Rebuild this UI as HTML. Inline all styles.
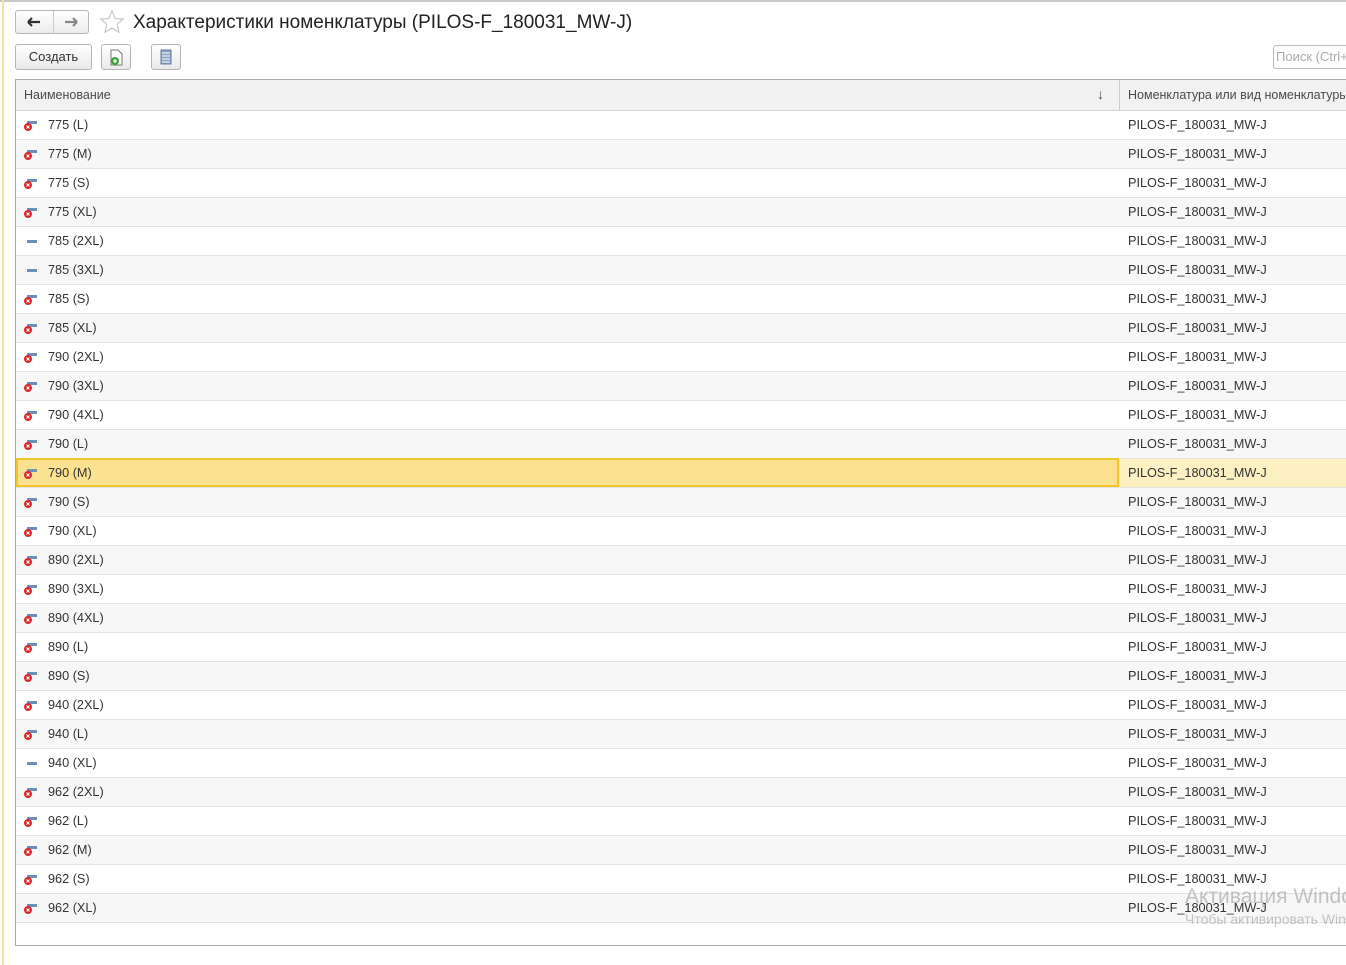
<!DOCTYPE html>
<html><head><meta charset="utf-8"><style>
*{box-sizing:border-box;margin:0;padding:0}
body{width:1346px;height:965px;overflow:hidden;background:#fff;font-family:"Liberation Sans",Arial,sans-serif;position:relative;color:#333}
.top{position:absolute;left:0;top:0;width:1346px;height:2px;background:#c8c8c8}
.lstrip{position:absolute;left:2px;top:0;width:2px;height:965px;background:#f3e39a}
.nav{position:absolute;left:15px;top:10px;width:74px;height:24px;border:1px solid #b8b8b8;border-radius:3px;background:linear-gradient(#fff,#ececec)}
.nav .sep{position:absolute;left:37px;top:0;width:1px;height:22px;background:#ccc}
.title{position:absolute;left:133px;top:12px;font-size:19px;color:#222;white-space:nowrap}
.btn{position:absolute;top:44px;height:26px;border:1px solid #b5b5b5;border-radius:3px;background:linear-gradient(#fff,#e9e9e9);font-size:13px;color:#333;text-align:center;line-height:24px}
.search{position:absolute;left:1273px;top:45px;width:80px;height:24px;border:1px solid #bbb;border-radius:3px;font-size:13px;color:#aaa;padding:3px 2px;white-space:nowrap;overflow:hidden}
.grid{position:absolute;left:15px;top:79px;width:1340px;height:867px;border:1px solid #a9a9a9;border-right:none}
.hdr{height:31px;background:#f2f2f2;border-bottom:1px solid #d4d4d4;font-size:12.5px;color:#4a4a4a;position:relative}
.hdr span{position:absolute;top:8px}
.row{height:29px;border-bottom:1px solid #e3e3e3;position:relative;font-size:12.7px;color:#333}
.row:nth-child(even){background:#f7f7f7}
.row .a{position:absolute;left:32px;top:7px}
.row .b{position:absolute;left:1112px;top:7px}
.row.sel{background:#fbe49a}
.row.sel .c1{position:absolute;left:0;top:-1px;width:1103px;height:29px;border:2px solid #f2c529;background:#fce290}
.row.sel .c2{position:absolute;left:1104px;top:0;width:240px;height:28px;background:#fdf1c4}
.ic{position:absolute;left:6px;top:6px;width:16px;height:16px}
</style></head><body>
<div class="top"></div><div class="lstrip"></div>
<div class="nav"><svg width="74" height="24" style="position:absolute;left:0;top:0"><path d="M12 11h12M12 11l4-4M12 11l4 4" stroke="#333" stroke-width="2.2" fill="none"/><path d="M49 11h12M61 11l-4-4M61 11l-4 4" stroke="#888" stroke-width="2.2" fill="none"/></svg><div class="sep"></div></div>
<svg style="position:absolute;left:99px;top:10px" width="26" height="24"><path d="M13 1l3.2 7.5 8 .6-6.1 5.2 1.9 7.9L13 18l-7 4.2 1.9-7.9L1.8 9.1l8-.6z" fill="none" stroke="#c8c8c8" stroke-width="1.2"/></svg>
<div class="title">Характеристики номенклатуры (PILOS-F_180031_MW-J)</div>
<div class="btn" style="left:15px;width:77px">Создать</div>
<div class="btn" style="left:101px;width:30px"><svg width="28" height="24"><path d="M9 5h7l4 4v11H9z" fill="#fff" stroke="#777"/><circle cx="13" cy="16" r="4" fill="#3aa43a"/><path d="M11 16h4M13 14v4" stroke="#fff" stroke-width="1.3"/></svg></div>
<div class="btn" style="left:151px;width:30px"><svg width="28" height="24"><rect x="9" y="5" width="10" height="14" fill="#8aa5c2" stroke="#5f7da0"/><path d="M10 8h8M10 11h8M10 14h8M10 17h8" stroke="#fff"/></svg></div>
<div class="search">Поиск (Ctrl+F)</div>
<div class="grid">
<div class="hdr"><span style="left:8px">Наименование</span><span style="left:1081px;top:6px;font-size:14px">↓</span><div style="position:absolute;left:1103px;top:0;width:1px;height:30px;background:#ccc"></div><span style="left:1112px;white-space:nowrap">Номенклатура или вид номенклатуры</span></div>
<div id="rows">
<div class="row"><svg class="ic"><rect x="5" y="4" width="10" height="3" fill="#6d8fb5"/><circle cx="6" cy="10" r="4" fill="#d9262b"/><path d="M4.5 8.5l3 3M7.5 8.5l-3 3" stroke="#fff"/></svg><span class="a">775 (L)</span><span class="b">PILOS-F_180031_MW-J</span></div>
<div class="row"><svg class="ic"><rect x="5" y="4" width="10" height="3" fill="#6d8fb5"/><circle cx="6" cy="10" r="4" fill="#d9262b"/><path d="M4.5 8.5l3 3M7.5 8.5l-3 3" stroke="#fff"/></svg><span class="a">775 (M)</span><span class="b">PILOS-F_180031_MW-J</span></div>
<div class="row"><svg class="ic"><rect x="5" y="4" width="10" height="3" fill="#6d8fb5"/><circle cx="6" cy="10" r="4" fill="#d9262b"/><path d="M4.5 8.5l3 3M7.5 8.5l-3 3" stroke="#fff"/></svg><span class="a">775 (S)</span><span class="b">PILOS-F_180031_MW-J</span></div>
<div class="row"><svg class="ic"><rect x="5" y="4" width="10" height="3" fill="#6d8fb5"/><circle cx="6" cy="10" r="4" fill="#d9262b"/><path d="M4.5 8.5l3 3M7.5 8.5l-3 3" stroke="#fff"/></svg><span class="a">775 (XL)</span><span class="b">PILOS-F_180031_MW-J</span></div>
<div class="row"><svg class="ic"><rect x="5" y="7" width="10" height="3" fill="#6d8fb5"/></svg><span class="a">785 (2XL)</span><span class="b">PILOS-F_180031_MW-J</span></div>
<div class="row"><svg class="ic"><rect x="5" y="7" width="10" height="3" fill="#6d8fb5"/></svg><span class="a">785 (3XL)</span><span class="b">PILOS-F_180031_MW-J</span></div>
<div class="row"><svg class="ic"><rect x="5" y="4" width="10" height="3" fill="#6d8fb5"/><circle cx="6" cy="10" r="4" fill="#d9262b"/><path d="M4.5 8.5l3 3M7.5 8.5l-3 3" stroke="#fff"/></svg><span class="a">785 (S)</span><span class="b">PILOS-F_180031_MW-J</span></div>
<div class="row"><svg class="ic"><rect x="5" y="4" width="10" height="3" fill="#6d8fb5"/><circle cx="6" cy="10" r="4" fill="#d9262b"/><path d="M4.5 8.5l3 3M7.5 8.5l-3 3" stroke="#fff"/></svg><span class="a">785 (XL)</span><span class="b">PILOS-F_180031_MW-J</span></div>
<div class="row"><svg class="ic"><rect x="5" y="4" width="10" height="3" fill="#6d8fb5"/><circle cx="6" cy="10" r="4" fill="#d9262b"/><path d="M4.5 8.5l3 3M7.5 8.5l-3 3" stroke="#fff"/></svg><span class="a">790 (2XL)</span><span class="b">PILOS-F_180031_MW-J</span></div>
<div class="row"><svg class="ic"><rect x="5" y="4" width="10" height="3" fill="#6d8fb5"/><circle cx="6" cy="10" r="4" fill="#d9262b"/><path d="M4.5 8.5l3 3M7.5 8.5l-3 3" stroke="#fff"/></svg><span class="a">790 (3XL)</span><span class="b">PILOS-F_180031_MW-J</span></div>
<div class="row"><svg class="ic"><rect x="5" y="4" width="10" height="3" fill="#6d8fb5"/><circle cx="6" cy="10" r="4" fill="#d9262b"/><path d="M4.5 8.5l3 3M7.5 8.5l-3 3" stroke="#fff"/></svg><span class="a">790 (4XL)</span><span class="b">PILOS-F_180031_MW-J</span></div>
<div class="row"><svg class="ic"><rect x="5" y="4" width="10" height="3" fill="#6d8fb5"/><circle cx="6" cy="10" r="4" fill="#d9262b"/><path d="M4.5 8.5l3 3M7.5 8.5l-3 3" stroke="#fff"/></svg><span class="a">790 (L)</span><span class="b">PILOS-F_180031_MW-J</span></div>
<div class="row sel"><div class="c1"></div><div class="c2"></div><svg class="ic"><rect x="5" y="4" width="10" height="3" fill="#6d8fb5"/><circle cx="6" cy="10" r="4" fill="#d9262b"/><path d="M4.5 8.5l3 3M7.5 8.5l-3 3" stroke="#fff"/></svg><span class="a">790 (M)</span><span class="b">PILOS-F_180031_MW-J</span></div>
<div class="row"><svg class="ic"><rect x="5" y="4" width="10" height="3" fill="#6d8fb5"/><circle cx="6" cy="10" r="4" fill="#d9262b"/><path d="M4.5 8.5l3 3M7.5 8.5l-3 3" stroke="#fff"/></svg><span class="a">790 (S)</span><span class="b">PILOS-F_180031_MW-J</span></div>
<div class="row"><svg class="ic"><rect x="5" y="4" width="10" height="3" fill="#6d8fb5"/><circle cx="6" cy="10" r="4" fill="#d9262b"/><path d="M4.5 8.5l3 3M7.5 8.5l-3 3" stroke="#fff"/></svg><span class="a">790 (XL)</span><span class="b">PILOS-F_180031_MW-J</span></div>
<div class="row"><svg class="ic"><rect x="5" y="4" width="10" height="3" fill="#6d8fb5"/><circle cx="6" cy="10" r="4" fill="#d9262b"/><path d="M4.5 8.5l3 3M7.5 8.5l-3 3" stroke="#fff"/></svg><span class="a">890 (2XL)</span><span class="b">PILOS-F_180031_MW-J</span></div>
<div class="row"><svg class="ic"><rect x="5" y="4" width="10" height="3" fill="#6d8fb5"/><circle cx="6" cy="10" r="4" fill="#d9262b"/><path d="M4.5 8.5l3 3M7.5 8.5l-3 3" stroke="#fff"/></svg><span class="a">890 (3XL)</span><span class="b">PILOS-F_180031_MW-J</span></div>
<div class="row"><svg class="ic"><rect x="5" y="4" width="10" height="3" fill="#6d8fb5"/><circle cx="6" cy="10" r="4" fill="#d9262b"/><path d="M4.5 8.5l3 3M7.5 8.5l-3 3" stroke="#fff"/></svg><span class="a">890 (4XL)</span><span class="b">PILOS-F_180031_MW-J</span></div>
<div class="row"><svg class="ic"><rect x="5" y="4" width="10" height="3" fill="#6d8fb5"/><circle cx="6" cy="10" r="4" fill="#d9262b"/><path d="M4.5 8.5l3 3M7.5 8.5l-3 3" stroke="#fff"/></svg><span class="a">890 (L)</span><span class="b">PILOS-F_180031_MW-J</span></div>
<div class="row"><svg class="ic"><rect x="5" y="4" width="10" height="3" fill="#6d8fb5"/><circle cx="6" cy="10" r="4" fill="#d9262b"/><path d="M4.5 8.5l3 3M7.5 8.5l-3 3" stroke="#fff"/></svg><span class="a">890 (S)</span><span class="b">PILOS-F_180031_MW-J</span></div>
<div class="row"><svg class="ic"><rect x="5" y="4" width="10" height="3" fill="#6d8fb5"/><circle cx="6" cy="10" r="4" fill="#d9262b"/><path d="M4.5 8.5l3 3M7.5 8.5l-3 3" stroke="#fff"/></svg><span class="a">940 (2XL)</span><span class="b">PILOS-F_180031_MW-J</span></div>
<div class="row"><svg class="ic"><rect x="5" y="4" width="10" height="3" fill="#6d8fb5"/><circle cx="6" cy="10" r="4" fill="#d9262b"/><path d="M4.5 8.5l3 3M7.5 8.5l-3 3" stroke="#fff"/></svg><span class="a">940 (L)</span><span class="b">PILOS-F_180031_MW-J</span></div>
<div class="row"><svg class="ic"><rect x="5" y="7" width="10" height="3" fill="#6d8fb5"/></svg><span class="a">940 (XL)</span><span class="b">PILOS-F_180031_MW-J</span></div>
<div class="row"><svg class="ic"><rect x="5" y="4" width="10" height="3" fill="#6d8fb5"/><circle cx="6" cy="10" r="4" fill="#d9262b"/><path d="M4.5 8.5l3 3M7.5 8.5l-3 3" stroke="#fff"/></svg><span class="a">962 (2XL)</span><span class="b">PILOS-F_180031_MW-J</span></div>
<div class="row"><svg class="ic"><rect x="5" y="4" width="10" height="3" fill="#6d8fb5"/><circle cx="6" cy="10" r="4" fill="#d9262b"/><path d="M4.5 8.5l3 3M7.5 8.5l-3 3" stroke="#fff"/></svg><span class="a">962 (L)</span><span class="b">PILOS-F_180031_MW-J</span></div>
<div class="row"><svg class="ic"><rect x="5" y="4" width="10" height="3" fill="#6d8fb5"/><circle cx="6" cy="10" r="4" fill="#d9262b"/><path d="M4.5 8.5l3 3M7.5 8.5l-3 3" stroke="#fff"/></svg><span class="a">962 (M)</span><span class="b">PILOS-F_180031_MW-J</span></div>
<div class="row"><svg class="ic"><rect x="5" y="4" width="10" height="3" fill="#6d8fb5"/><circle cx="6" cy="10" r="4" fill="#d9262b"/><path d="M4.5 8.5l3 3M7.5 8.5l-3 3" stroke="#fff"/></svg><span class="a">962 (S)</span><span class="b">PILOS-F_180031_MW-J</span></div>
<div class="row"><svg class="ic"><rect x="5" y="4" width="10" height="3" fill="#6d8fb5"/><circle cx="6" cy="10" r="4" fill="#d9262b"/><path d="M4.5 8.5l3 3M7.5 8.5l-3 3" stroke="#fff"/></svg><span class="a">962 (XL)</span><span class="b">PILOS-F_180031_MW-J</span></div>
</div></div>
<div style="position:absolute;left:1185px;top:885px;font-size:21px;color:rgba(150,150,150,.55);white-space:nowrap">Активация Windows</div>
<div style="position:absolute;left:1185px;top:911px;font-size:14px;color:rgba(150,150,150,.55);white-space:nowrap">Чтобы активировать Windows</div>
</body></html>
